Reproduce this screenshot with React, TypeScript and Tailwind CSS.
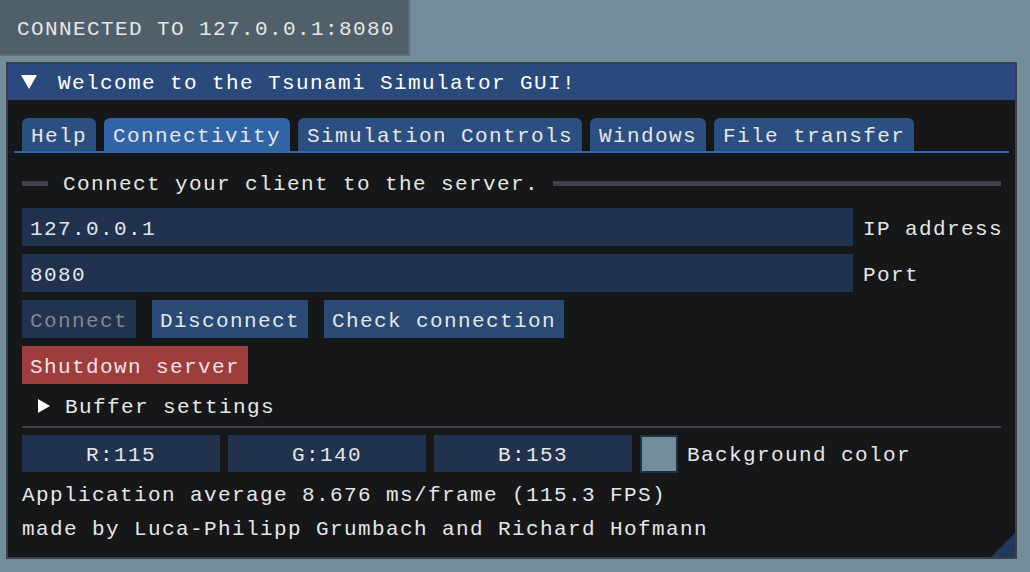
const mono = "font-['Liberation_Mono','DejaVu_Sans_Mono',monospace] text-[21px] tracking-[1.4px] leading-[26px]";

const tabs = ["Help", "Connectivity", "Simulation Controls", "Windows", "File transfer"];

function Tab({ label, active }: { label: string; active?: boolean }) {
  return (
    <div
      className={`h-[33px] px-[9px] pt-[5px] rounded-t-[6px] flex items-center ${
        active ? "bg-[#3064a6]" : "bg-[#2b4f81]"
      }`}
    >
      {label}
    </div>
  );
}

function InputRow({ value, label }: { value: string; label: string }) {
  return (
    <div className="flex items-center mt-[8px] h-[38px] whitespace-nowrap">
      <div className="w-[831px] shrink-0 h-full bg-[#20324d] flex items-center pl-[8px] pt-[5px]">{value}</div>
      <span className="ml-[10px] pt-[5px]">{label}</span>
    </div>
  );
}

function ColorField({ text }: { text: string }) {
  return (
    <div className="w-[198px] h-full bg-[#20324d] flex items-center justify-center pt-[4px]">{text}</div>
  );
}

export default function App() {
  return (
    <div className={`w-[1030px] h-[572px] bg-[#738c99] text-[#e6e6e6] overflow-hidden ${mono}`}>
      {/* connection overlay */}
      <div className="w-[410px] h-[56px] bg-[#50606a] border-r-2 border-b-2 border-[#5e6d76] flex items-center pl-[17px] pt-[6px]">
        CONNECTED TO 127.0.0.1:8080
      </div>

      {/* main window */}
      <div className="relative ml-[6px] mt-[6px] w-[1011px] h-[497px] border-2 border-[#3c3e49] bg-[#151719] flex flex-col">
        <div className="h-[36px] bg-[#294a7a] flex items-center text-white">
          <svg width="18" height="16" viewBox="0 0 18 16" className="ml-[12px] mr-[20px]">
            <polygon points="1,1 17,1 9,15" fill="#ffffff" />
          </svg>
          <span className="pt-[4px]">Welcome to the Tsunami Simulator GUI!</span>
        </div>

        <div className="px-[14px] pt-[18px] flex flex-col">
          <div className="flex items-end gap-2 h-[33px]">
            {tabs.map((t) => (
              <Tab key={t} label={t} active={t === "Connectivity"} />
            ))}
          </div>
          <div className="-mx-[8px] h-[2px] bg-[#3266a9]" />

          {/* separator text */}
          <div className="flex items-center mt-[17px] h-[26px]">
            <div className="w-[26px] h-[5px] bg-[#40414a]" />
            <span className="ml-[15px] pt-[4px]">Connect your client to the server.</span>
            <div className="flex-1 ml-[14px] h-[5px] bg-[#40414a]" />
          </div>

          <div className="mt-[4px]" />
          <InputRow value="127.0.0.1" label="IP address" />
          <InputRow value="8080" label="Port" />

          <div className="flex mt-[8px] h-[38px] gap-4">
            <div className="px-[8px] pt-[5px] bg-[#20344f] text-[#808891] flex items-center">Connect</div>
            <div className="px-[8px] pt-[5px] bg-[#284a74] flex items-center">Disconnect</div>
            <div className="px-[8px] pt-[5px] bg-[#284a74] flex items-center">Check connection</div>
          </div>

          <div className="flex mt-[8px] h-[38px]">
            <div className="px-[8px] pt-[5px] bg-[#9e3d3d] text-[#eee3e3] flex items-center">Shutdown server</div>
          </div>

          <div className="flex items-center mt-[8px] h-[28px]">
            <svg width="12" height="16" viewBox="0 0 12 16" className="ml-[16px] mr-[15px]">
              <polygon points="0,1 12,8 0,15" fill="#ffffff" />
            </svg>
            <span className="pt-[4px]">Buffer settings</span>
          </div>

          <div className="mt-[6px] h-[2px] bg-[#3e3f48]" />

          <div className="flex items-center mt-[7px] h-[37px] gap-2">
            <ColorField text="R:115" />
            <ColorField text="G:140" />
            <ColorField text="B:153" />
            <div className="w-[38px] h-[38px] border-2 border-[#1f3049] bg-[#738c99]" />
            <span className="ml-[1px] pt-[4px]">Background color</span>
          </div>

          <div className="mt-[9px] h-[26px] pt-[2px]">Application average 8.676 ms/frame (115.3 FPS)</div>
          <div className="mt-[8px] h-[26px] pt-[2px]">made by Luca-Philipp Grumbach and Richard Hofmann</div>
        </div>

        {/* resize grip */}
        <svg width="24" height="24" viewBox="0 0 24 24" className="absolute right-0 bottom-0">
          <polygon points="24,0 24,24 0,24" fill="#213a5a" />
        </svg>
      </div>
    </div>
  );
}
